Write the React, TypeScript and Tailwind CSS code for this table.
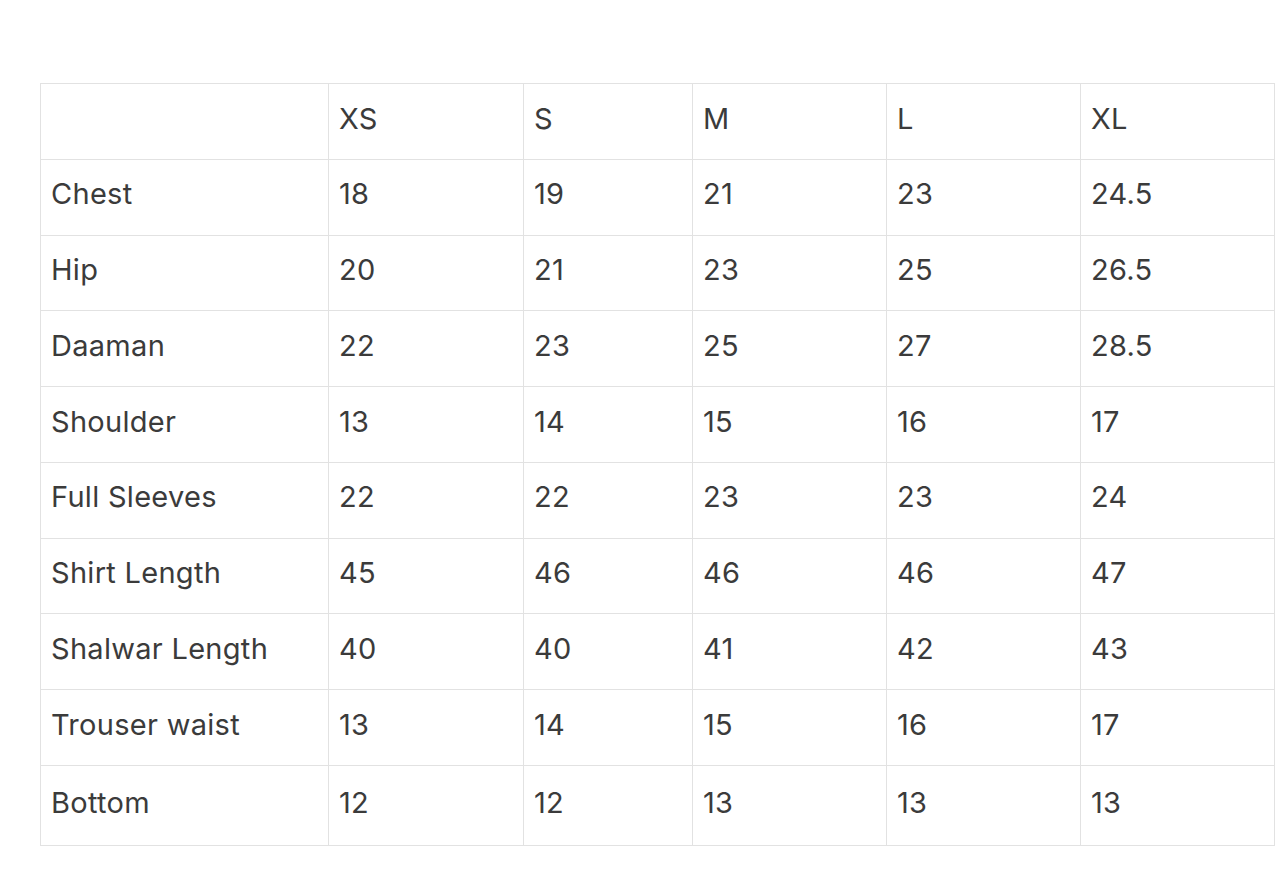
const SIZES = ['XS', 'S', 'M', 'L', 'XL'];

const ROWS: [string, string[]][] = [
  ['Chest', ['18', '19', '21', '23', '24.5']],
  ['Hip', ['20', '21', '23', '25', '26.5']],
  ['Daaman', ['22', '23', '25', '27', '28.5']],
  ['Shoulder', ['13', '14', '15', '16', '17']],
  ['Full Sleeves', ['22', '22', '23', '23', '24']],
  ['Shirt Length', ['45', '46', '46', '46', '47']],
  ['Shalwar Length', ['40', '40', '41', '42', '43']],
  ['Trouser waist', ['13', '14', '15', '16', '17']],
  ['Bottom', ['12', '12', '13', '13', '13']],
];

const cell = 'border border-[#e2e2e2] pl-2.5 pr-2 pb-1.5 text-left align-middle font-normal';

export default function App() {
  return (
    <div className="min-h-[896px] w-full bg-white pt-[83px] pl-[40px] text-[29px] tracking-[0.01em] text-[#3b3b3b] [font-family:Inter,'Liberation_Sans',sans-serif]">
      <table className="table-fixed border-collapse">
        <colgroup>
          <col className="w-[288px]" />
          <col className="w-[195px]" />
          <col className="w-[169px]" />
          <col className="w-[194px]" />
          <col className="w-[194px]" />
          <col className="w-[194px]" />
        </colgroup>
        <thead>
          <tr className="h-[75.75px]">
            <th className={cell}></th>
            {SIZES.map((s) => (
              <th key={s} className={cell}>
                {s}
              </th>
            ))}
          </tr>
        </thead>
        <tbody>
          {ROWS.map(([label, values], i) => (
            <tr key={label} className={i === ROWS.length - 1 ? 'h-[80px]' : 'h-[75.75px]'}>
              <td className={cell}>{label}</td>
              {values.map((v, j) => (
                <td key={j} className={cell}>
                  {v}
                </td>
              ))}
            </tr>
          ))}
        </tbody>
      </table>
    </div>
  );
}
